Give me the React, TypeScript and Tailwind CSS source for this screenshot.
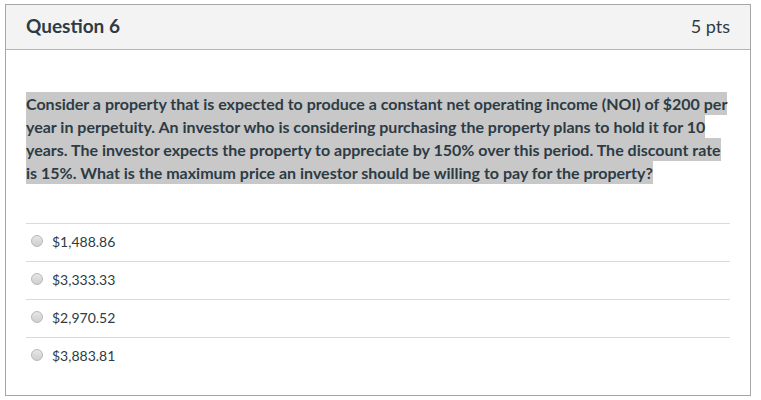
export default function App() {
  const answers = ['$1,488.86', '$3,333.33', '$2,970.52', '$3,883.81']

  return (
    <div className="min-h-[400px] bg-white pl-[5px] pt-[4px]" style={{ fontFamily: 'Lato, "Open Sans", sans-serif' }}>
      <div className="flex h-[392px] w-[746px] flex-col border border-[#a6a6a6] text-[#2d3b45]">
        <div className="flex h-[45px] shrink-0 items-center justify-between border-b border-[#b5b5b5] bg-[#f3f3f3] px-[20px] pb-[2px]">
          <span className="text-[19px] font-bold">Question 6</span>
          <span className="text-[18px]">5 pts</span>
        </div>

        <div className="px-[20px] pt-[42px]">
          <p className="text-[16px] leading-[23px]">
            <span className="bg-[#c8c8c8] py-[2px] font-bold">
              Consider a property that is expected to produce a constant net operating income (NOI) of $200 per year in
              perpetuity. An investor who is considering purchasing the property plans to hold it for 10 years. The investor
              expects the property to appreciate by 150% over this period. The discount rate is 15%. What is the maximum price
              an investor should be willing to pay for the property?
            </span>
          </p>

          <div className="mt-[39px]">
            {answers.map((answer) => (
              <div key={answer} className="flex h-[38px] items-center border-t border-[#dadada] pb-[3px] pl-[5px]">
                <span className="h-[12px] w-[12px] rounded-full border border-[#b8b8b8] bg-gradient-to-b from-[#e6e6e6] to-[#cfcfcf]" />
                <span className="ml-[9px] text-[14px]">{answer}</span>
              </div>
            ))}
          </div>
        </div>
      </div>
    </div>
  )
}
